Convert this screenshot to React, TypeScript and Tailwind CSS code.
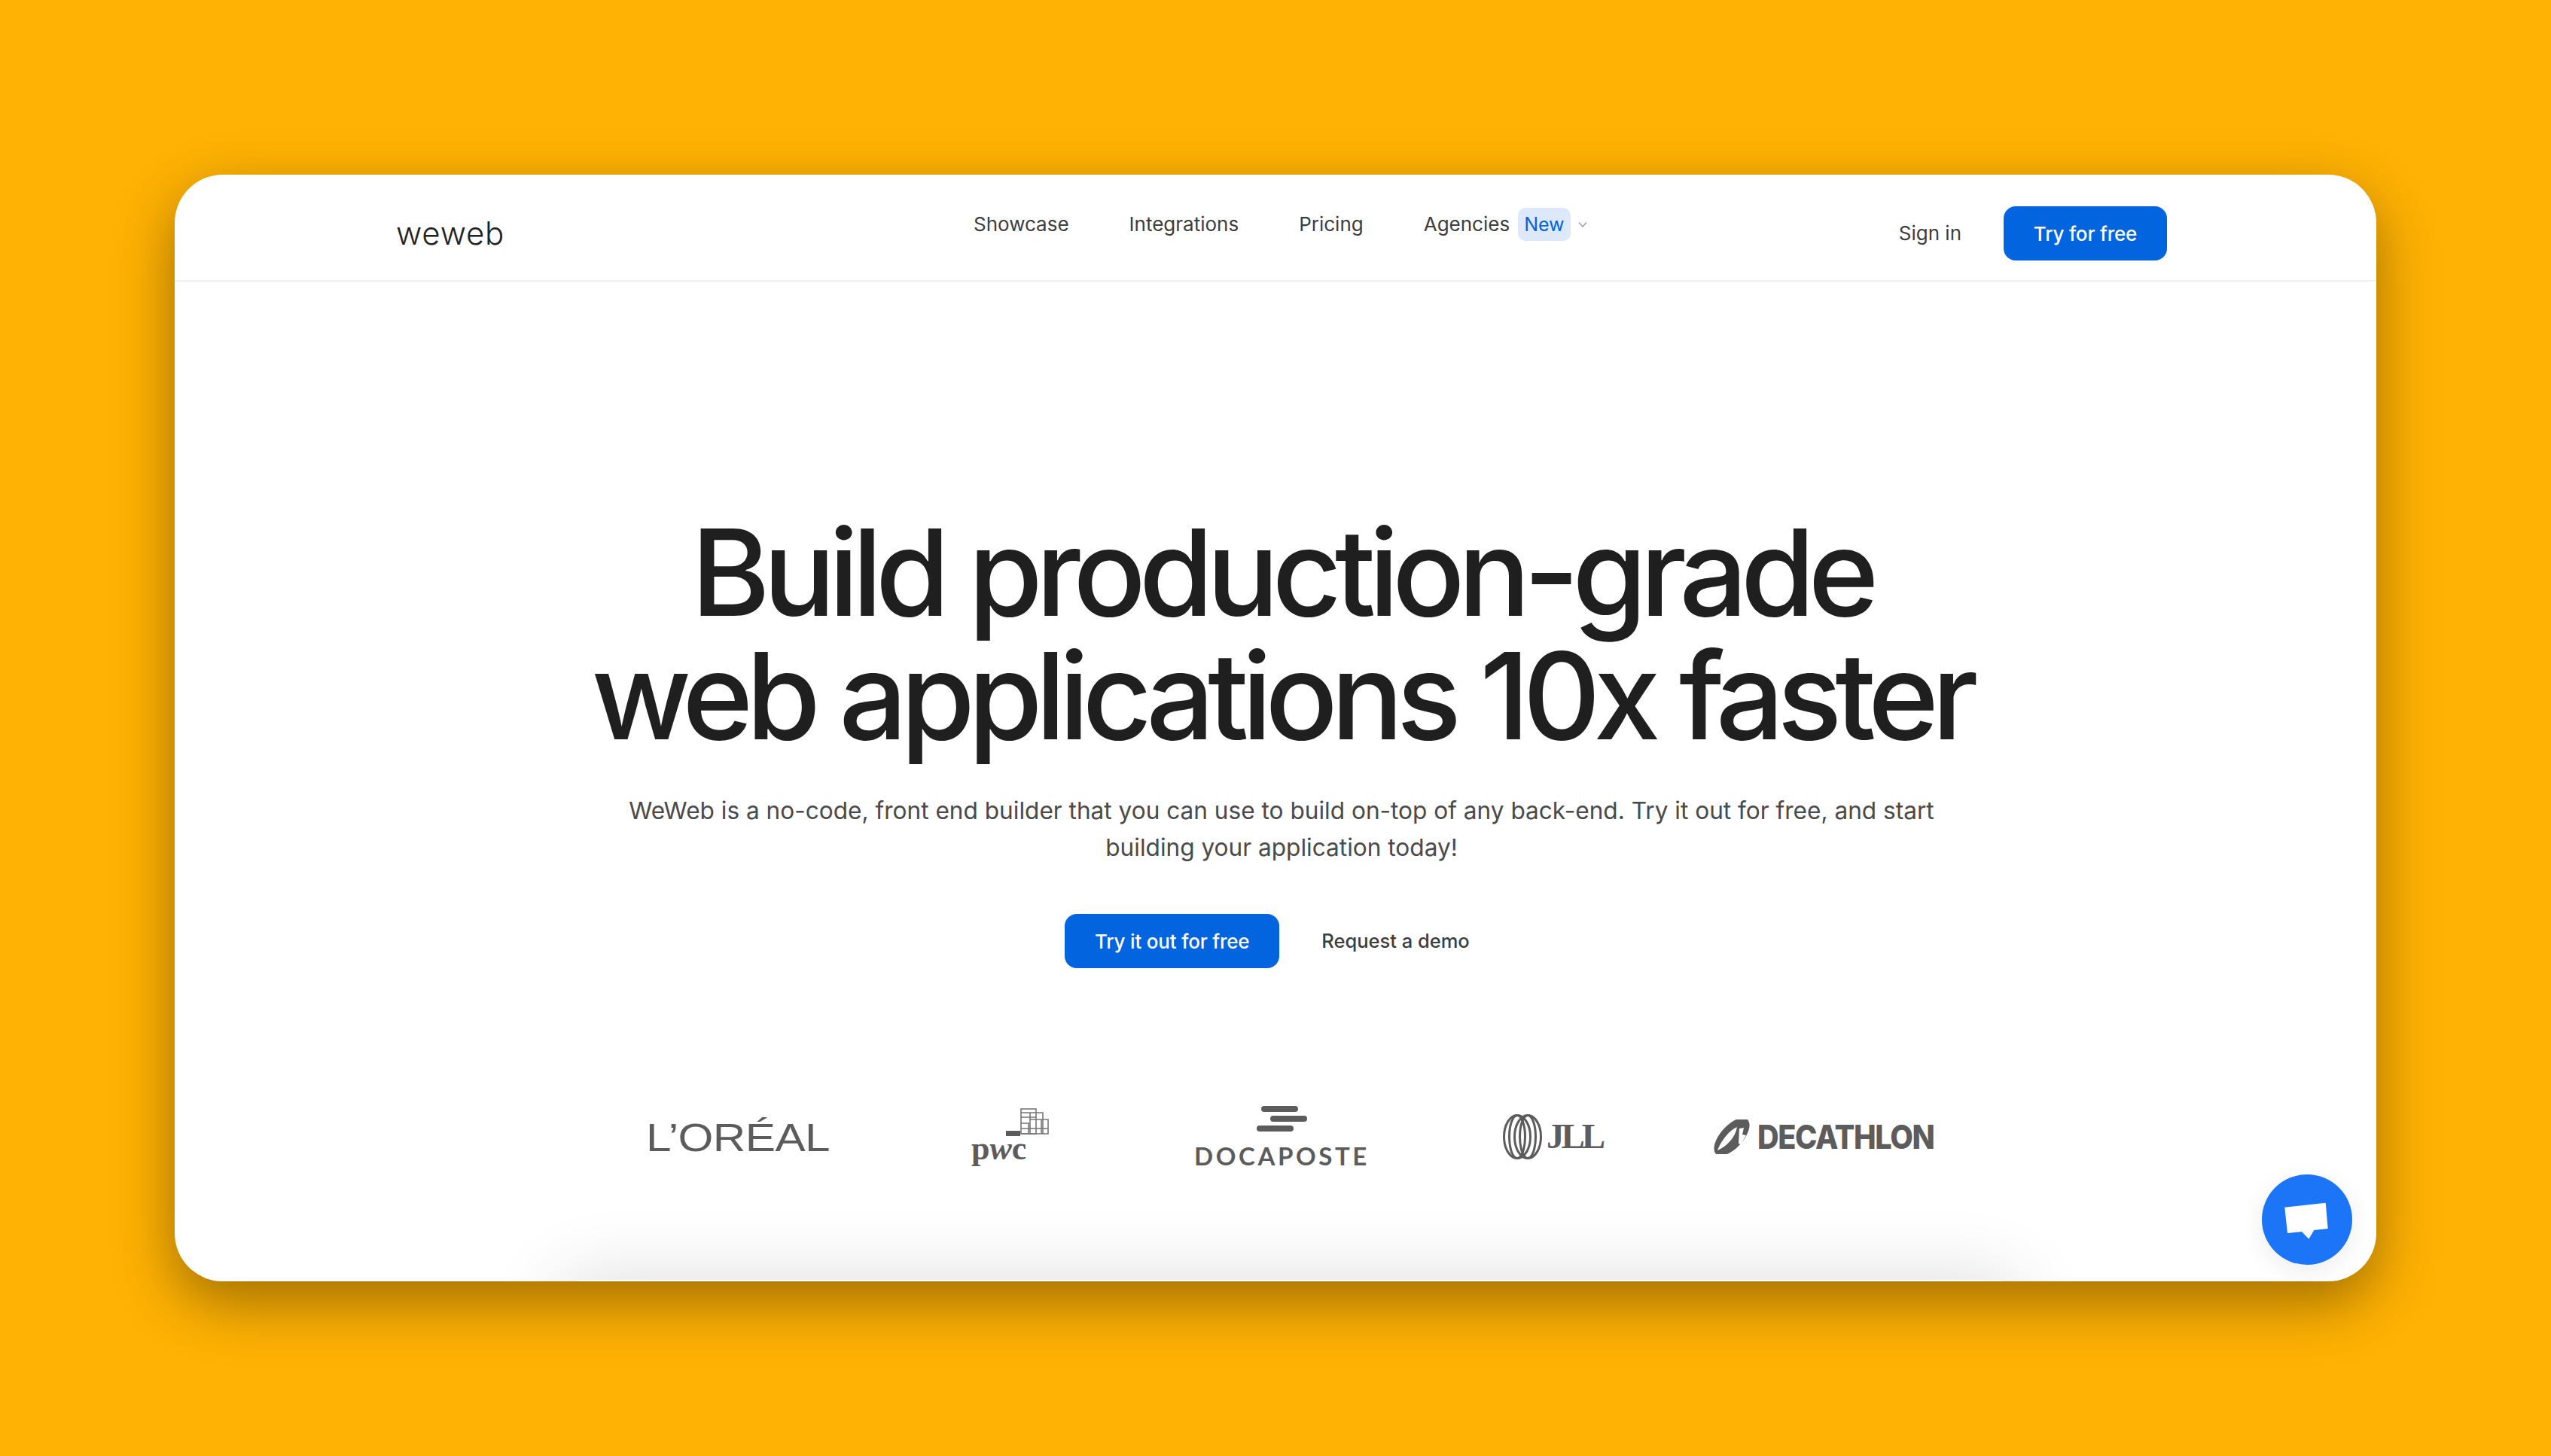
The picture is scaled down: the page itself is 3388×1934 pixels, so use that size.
const INTER = "font-['Inter',sans-serif]";

const NAV_ITEMS = ["Showcase", "Integrations", "Pricing"];

function Header() {
  return (
    <header className="flex h-[142px] shrink-0 items-center border-b-2 border-[#f0f0f0] pl-[294px] pr-[278px] pt-[16px]">
      <span className="-mt-[1px] w-[146px] text-[42px] font-light leading-none tracking-[0.8px] text-[#222222]">weweb</span>
      <nav className="mb-[25px] ml-[621px] flex items-center gap-[80px] text-[26px] text-[#3d3d3d]">
        {NAV_ITEMS.map((item) => (
          <a key={item}>{item}</a>
        ))}
        <div className="flex items-center">
          <a>Agencies</a>
          <span className="ml-[11px] rounded-[10px] bg-[#dde9fa] px-[8px] py-[6px] text-[25px] leading-[32px] text-[#0364df]">
            New
          </span>
          <svg className="ml-[8px]" width="16" height="16" viewBox="0 0 16 16" fill="none" stroke="#a3a3a3" strokeWidth="1.6">
            <path d="M3 5.5l5 5.5 5-5.5" />
          </svg>
        </div>
      </nav>
      <div className="ml-auto flex items-center gap-[56px]">
        <a className="-mt-[1px] text-[26px] text-[#3d3d3d]">Sign in</a>
        <a className="flex h-[72px] w-[217px] items-center justify-center rounded-[16px] bg-[#0364df] text-[26px] font-medium tracking-[-0.2px] text-white">
          Try for free
        </a>
      </div>
    </header>
  );
}

function PwcMark() {
  return (
    <svg width="60" height="38" viewBox="0 0 60 38" fill="none" stroke="#777777" strokeWidth="1.6">
      <rect x="20" y="1" width="20" height="33" />
      <path d="M20 6h20M20 12h20M32 6v28M40 6h9v28" />
      <path d="M32 15h24v19H20M20 20h10v14M20 27h36M47 15v19" />
      <rect x="0" y="30" width="19" height="7" fill="#5c5c5c" stroke="none" />
    </svg>
  );
}

function JllRings() {
  return (
    <svg width="52" height="60" viewBox="0 0 52 60" fill="none" stroke="#5c5c5c" strokeWidth="3">
      <ellipse cx="19" cy="30" rx="17.5" ry="28.5" />
      <ellipse cx="33" cy="30" rx="17.5" ry="28.5" />
      <ellipse cx="19" cy="30" rx="10.5" ry="28.5" />
      <ellipse cx="33" cy="30" rx="10.5" ry="28.5" />
    </svg>
  );
}

function DecathlonMark() {
  return (
    <svg width="52" height="46" viewBox="0 0 52 46">
      <ellipse cx="26" cy="23" rx="31" ry="15" transform="rotate(-48 26 23)" fill="#5c5c5c" />
      <path d="M33 10C22 15 12 28 7 41 18 36 30 26 33 10z" fill="#ffffff" />
      <path d="M36 12l-1 20 3 1 7-12-5-1 2-9z" fill="#ffffff" />
    </svg>
  );
}

function LogoRow() {
  return (
    <div className="mt-[183px] flex h-[81px] items-center text-[#5c5c5c]">
      <span className="ml-[626px] mt-[2px] w-[244px] origin-left scale-x-[1.16] whitespace-nowrap font-['Liberation_Sans',sans-serif] text-[52px] leading-none tracking-[-0.5px]">
        L’ORÉAL
      </span>
      <div className="ml-[188px] flex w-[105px] flex-col">
        <div className="ml-[46px]">
          <PwcMark />
        </div>
        <span className="-mt-[6px] font-['Liberation_Serif',serif] text-[44px] font-bold leading-[44px]">
          p<em>w</em>c
        </span>
      </div>
      <div className="ml-[193px] flex w-[229px] flex-col items-center">
        <div className="flex w-[67px] flex-col gap-[5px]">
          <div className="ml-[6px] h-[8px] w-[49px] rounded-full bg-[#5c5c5c]" />
          <div className="ml-[18px] h-[8px] w-[49px] rounded-full bg-[#5c5c5c]" />
          <div className="h-[8px] w-[49px] rounded-full bg-[#5c5c5c]" />
        </div>
        <span className="mt-[18px] whitespace-nowrap font-['Lato',sans-serif] text-[33px] font-bold leading-[29px] tracking-[3.6px]">
          DOCAPOSTE
        </span>
      </div>
      <div className="ml-[179px] flex items-center gap-[6px]">
        <JllRings />
        <span className="font-['Liberation_Serif',serif] text-[47px] font-bold leading-none tracking-[-4px]">JLL</span>
      </div>
      <div className="ml-[146px] flex items-center gap-[8px]">
        <DecathlonMark />
        <span className="origin-left scale-x-[0.9] font-['Inter',sans-serif] text-[44px] font-extrabold leading-none tracking-[-1.5px]">
          DECATHLON
        </span>
      </div>
    </div>
  );
}

export default function App() {
  return (
    <div className={`${INTER} flex min-h-[1934px] w-[3388px] items-start bg-[#ffb203] pl-[232px] pt-[232px]`}>
      <div className="relative flex h-[1470px] w-[2924px] flex-col overflow-hidden rounded-[64px] bg-white shadow-[0_28px_80px_rgba(0,0,0,0.38)]">
        <Header />
        <main className="flex flex-col">
          <div className="flex flex-col items-center pl-[16px]">
            <h1 className="mt-[304px] text-center text-[160px] font-medium leading-[164px] tracking-[-9.2px] text-[#1f1f1f]">
              Build production-grade
              <br />
              web applications 10x faster
            </h1>
            <p className="mt-[46px] w-[1760px] text-center text-[31.6px] leading-[49px] text-[#4a4a4a]">
              WeWeb is a no-code, front end builder that you can use to build on-top of any back-end. Try it out for free, and start building your application today!
            </p>
            <div className="mr-[38px] mt-[64px] flex items-center gap-[56px]">
              <a className="flex h-[72px] w-[285px] items-center justify-center rounded-[16px] bg-[#0364df] text-[26px] font-medium tracking-[-0.2px] text-white">
                Try it out for free
              </a>
              <a className="text-[25.5px] font-medium text-[#3d3d3d]">Request a demo</a>
            </div>
          </div>
          <LogoRow />
          <div className="ml-[510px] mt-[150px] h-[200px] w-[1940px] shrink-0 rounded-[32px] bg-white shadow-[0_0_100px_rgba(0,0,0,0.14)]" />
        </main>
        <button className="absolute bottom-[22px] right-[32px] flex h-[120px] w-[120px] items-center justify-center rounded-full bg-[#1c74f6] shadow-[0_8px_32px_rgba(0,0,0,0.08)]">
          <svg width="120" height="120" viewBox="0 0 120 120" fill="#ffffff">
            <path d="M30.3 43.7L84.7 37.7 87.7 72 69.3 74 62.3 85.7 53 76 34 78z" />
          </svg>
        </button>
      </div>
    </div>
  );
}
